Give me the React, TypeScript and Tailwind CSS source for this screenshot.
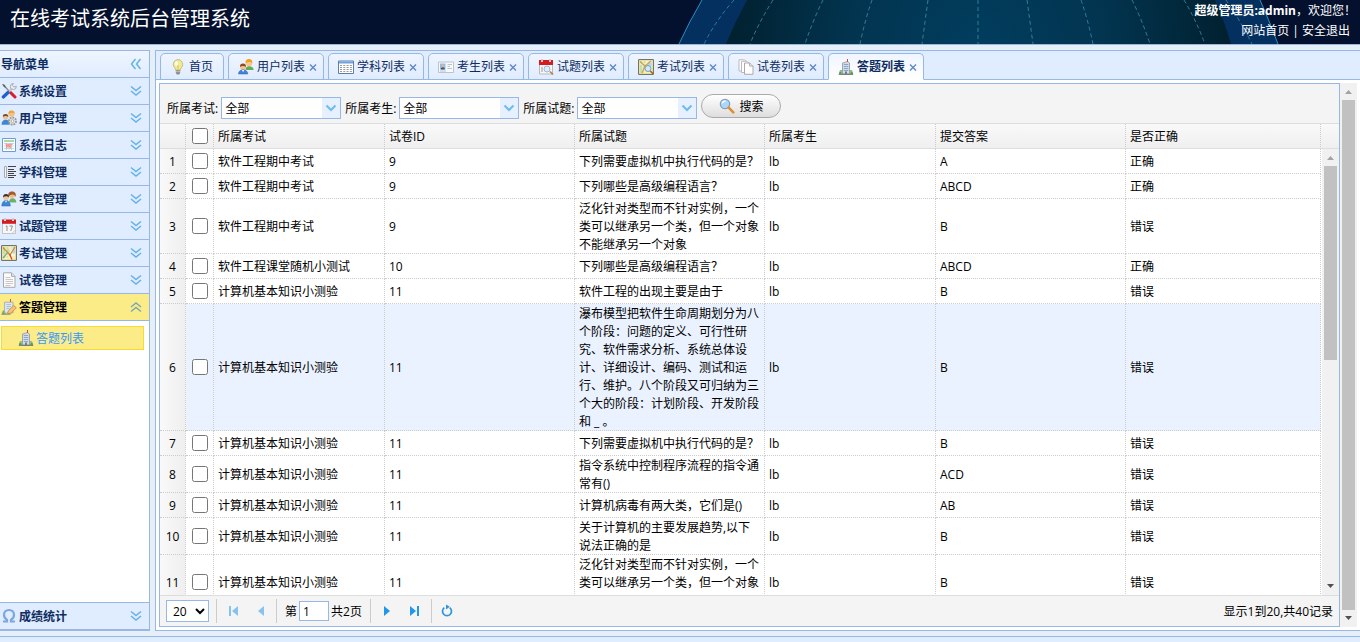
import { useState } from "react";
import type { ReactNode } from "react";

const icons: Record<string, ReactNode> = {
  tools: (
    <>
      <path d="M2 1.5 13.5 14" stroke="#8a8a8a" strokeWidth="1.4" />
      <path d="M1 1l3 1 1 3-2-1z" fill="#666" />
      <path d="M8.500 8.500 14 14" stroke="#d8202a" strokeWidth="3" strokeLinecap="round" />
      <path d="M12.500 4 6.500 10" stroke="#c4c7cc" strokeWidth="2.200" />
      <path d="M7 9.500 2.300 14" stroke="#1d63cf" strokeWidth="3.200" strokeLinecap="round" />
      <path d="M15.300 3.200a3 3 0 1 1-3-2.700l-1 2 1.600 1.600z" fill="#eceeef" stroke="#9a9ea3" strokeWidth=".8" />
    </>
  ),
  userGear: (
    <>
      <circle cx="10.500" cy="3.800" r="3" fill="#f3c08a" />
      <path d="M7.500 4C7.200 1 9 .4 10.600.4s3.400.8 3 3.600c-1-1.600-4-1.800-6.100 0z" fill="#eba52c" />
      <circle cx="4.600" cy="7" r="2.700" fill="#f0c193" />
      <path d="M1.900 7C1.700 4.600 3 4 4.600 4s3 .8 2.700 3c-1.200-1.300-4-1.400-5.400 0z" fill="#7a4a22" />
      <path d="M.5 14.800c0-3 1.500-5 4.200-5s4 2 4 5z" fill="#3f86da" />
      <circle cx="11.500" cy="11" r="3.300" fill="#e5e5e5" stroke="#9a9d94" strokeWidth="2.400" strokeDasharray="1.700 .8" />
      <circle cx="11.500" cy="11" r="2.600" fill="#e2e3dd" />
      <circle cx="11.500" cy="11" r="1.300" fill="#fff" stroke="#999" strokeWidth=".7" />
    </>
  ),
  log: (
    <>
      <path d="M1.500 1.500h13v13h-13z" fill="#fff" stroke="#6c9fd4" />
      <path d="M3 4h10" stroke="#9dcf86" strokeWidth="1.600" />
      <path d="M3 6.500h10M3 9h10M3 11.500h10M5.500 6v7M8 6v7M10.500 6v7" stroke="#b8cfe8" strokeWidth=".8" />
      <path d="M4.500 7.500h7M5.500 6.500v5M9.500 6.500v5" stroke="#f4897f" strokeWidth="1.200" opacity=".8" />
      <path d="M5.500 8h4.500v2.500H5.500z" fill="#f79b92" />
    </>
  ),
  lines: (
    <>
      <path d="M3.500 2.500h2v11h-2z" fill="#f6f6f6" stroke="#aaa" />
      <path d="M7 2.500h8M7 5.500h6M7 7.500h8M7 9.500h6M7 11.500h8M7 13.500h6" stroke="#444" />
    </>
  ),
  users: (
    <>
      <circle cx="11" cy="4" r="3" fill="#f0bd8c" />
      <path d="M7.500 6C6.500 2 8.500.6 11 .6s4.500 1.800 3.700 5.400c-.8-3-4.700-3.600-7.200 0z" fill="#a5592c" />
      <path d="M8 11.500c0-2.500 1-4.300 3.300-4.300 2.700 0 4 1.800 4 4.300z" fill="#6fb265" />
      <circle cx="5" cy="6.500" r="2.800" fill="#f3c79c" />
      <path d="M2.100 6.400C2 4 3.400 3 5 3s3.200 1 2.900 3.400c-1.500-1.500-4.200-1.500-5.800 0z" fill="#3a2d25" />
      <path d="M.8 15c0-3.200 1.600-5.500 4.300-5.500S9.300 11.800 9.300 15z" fill="#3d87d8" stroke="#2b66b0" strokeWidth=".5" />
      <path d="m4 9.700 1 2 1.100-2z" fill="#fff" />
    </>
  ),
  usersPair: (
    <>
      <circle cx="11" cy="4" r="3.200" fill="#f7c690" />
      <path d="M7.600 4.400C7.300 1 9 .1 11 .1s3.700 1.200 3.400 4.300c-1.500-1.700-4.700-1.800-6.800 0z" fill="#f0a31a" />
      <path d="M7.500 11c0-2.500 1-3.800 3.500-3.800 3 0 4.600 1.600 4.600 3.800z" fill="#64ad50" />
      <circle cx="5" cy="8" r="2.900" fill="#f3c093" />
      <path d="M2 8c-.2-2.600 1.200-3.500 3-3.500s3.200 1 3 3.500C6.500 6.700 3.600 6.600 2 8z" fill="#8d4c20" />
      <path d="M.5 15c0-2.500 1.700-4.200 4.500-4.200S9.800 12.500 9.800 15z" fill="#3e84dc" stroke="#2764b4" strokeWidth=".5" />
      <path d="m3.800 11 1.300 2 1.200-2z" fill="#fff" />
    </>
  ),
  calendar: (
    <>
      <path d="M1.500 4h13v11.500h-13z" fill="#f7f7f7" stroke="#c4c4c4" />
      <path d="M1 1.500h14v4.300H1z" fill="#d51b20" />
      <path d="M4 0v3M12 0v3" stroke="#fff" strokeWidth="1.800" />
      <path d="M4 0v2.500M12 0v2.500" stroke="#777" strokeWidth=".7" />
      <path d="m4.800 8.500 1.200-.7V13M8.500 8h3L9.700 13" fill="none" stroke="#8c9298" />
      <path d="m11 15.500 3.500-3.500" stroke="#c8c8c8" />
    </>
  ),
  calendarSearch: (
    <>
      <path d="M1.500 4h13v11h-13z" fill="#f7f7f7" stroke="#b9b9b9" />
      <path d="M1 1h14v5H1z" fill="#d51b20" />
      <path d="M4 0v3M12 0v3" stroke="#fff" strokeWidth="1.800" />
      <path d="M4 0v2.500M12 0v2.500" stroke="#777" strokeWidth=".7" />
      <path d="M4 8v5" stroke="#999" />
      <circle cx="9" cy="10" r="3" fill="#dcedfb" stroke="#9cb8d2" />
      <path d="m12 12.500 3 3" stroke="#b88045" strokeWidth="1.600" />
    </>
  ),
  map: (
    <>
      <path d="M.6.600h14.800v14.800H.6z" fill="#f6efae" stroke="#64685a" />
      <path d="M2 2h5l2 5-3 6H2z" fill="#c3dea8" />
      <path d="M10 2h4v6l-3 1z" fill="#b5d6f2" />
      <path d="M5 2v12M2 10h12M11 2v12" stroke="#fff" strokeWidth=".8" />
      <path d="M2 2.500 9 10l5-8" fill="none" stroke="#e0822f" strokeWidth="1.200" />
      <path d="m8.500 9 2.500 5.500" stroke="#e23b2c" strokeWidth="1.300" />
      <path d="m2 13 5-6" fill="none" stroke="#83ad5c" strokeWidth="1.200" />
    </>
  ),
  mapSearch: (
    <>
      <path d="M.6.600h14.800v14.800H.6z" fill="#f6efae" stroke="#64685a" />
      <path d="M2 2h5l1 5-3 7H2z" fill="#c7e0ab" />
      <path d="M10 2h4v5h-4z" fill="#b9d9f3" />
      <path d="M2 5h7M5 2v10M9 3h5" stroke="#fff" strokeWidth=".8" />
      <path d="m2 2.500 5 4.500-3 7M7 7l6-5" fill="none" stroke="#d99b45" strokeWidth="1.200" />
      <circle cx="10" cy="9.500" r="3" fill="#d2e9fb" stroke="#6f9ec9" />
      <path d="m12.300 12 3 3" stroke="#a8652b" strokeWidth="1.700" />
    </>
  ),
  page: (
    <>
      <path d="M2.500.8h8l3.500 3.500v11H2.500z" fill="#fbfbfb" stroke="#a8a8a8" />
      <path d="M10.500.8v3.500H14" fill="#e4e4e4" stroke="#a8a8a8" />
      <path d="M4.500 5.500h5M4.500 7.500h7.500M4.500 9.500h7.500M4.500 11.500h7.500M4.500 13.500h5" stroke="#c2c2c2" strokeWidth=".9" />
    </>
  ),
  pages: (
    <>
      <path d="M1 .8h5.500L9 3.300V12H1z" fill="#fff" stroke="#bbb" />
      <path d="M3.500 2.300h5.500l2.500 2.500V13.500h-8z" fill="#fff" stroke="#bbb" />
      <path d="M6.500 4h5.300L15 7v8.300H6.500z" fill="#fff" stroke="#aaa" />
      <path d="M11.700 4v3.100H15" fill="#eee" stroke="#aaa" />
    </>
  ),
  edit: (
    <>
      <path d="M.5 15.200 2 11.500h3v3.700z" fill="#6fb05f" />
      <path d="M3.500 3.200h8.500V14H3.500z" fill="#dbe5f0" stroke="#a0a7b0" strokeWidth=".8" />
      <path d="M5.500 5.500h4.500M5.500 7.500h4.500M5.500 9.500h3" stroke="#a9bfdb" />
      <path d="M9.500 0v3" stroke="#d92b2b" strokeWidth=".8" />
      <path d="m6.500 15 .9-3.300L12.800 6.500l2.500 2.300-5.200 5.300z" fill="#f8c474" stroke="#c58738" strokeWidth=".8" />
      <path d="M.5 15.400h9" stroke="#8a8a8a" strokeWidth=".8" />
    </>
  ),
  building: (
    <>
      <path d="M.8 15 2 11h2.500v4zM11.500 15v-4H14l1.200 4z" fill="#8fc286" />
      <path d="M1 15 1.800 12.500 4 14.500zM15 15l-.8-2.500-2.200 2z" fill="#4a9a3e" />
      <path d="M4.500 4 9.500 2.500l2 1.500v11h-7z" fill="#d4dae2" stroke="#8f959d" strokeWidth=".8" />
      <path d="M5.800 5.500h4.400M5.800 7.500h4.400M5.800 9.500h4.400M5.800 11.500h4.400" stroke="#86a8d2" />
      <path d="M7 12.500h2V15H7z" fill="#6f7e94" />
      <path d="M9.500 0v2.800" stroke="#d92b2b" strokeWidth=".9" />
      <path d="M.8 15.400h14.400" stroke="#666" strokeWidth=".9" />
    </>
  ),
  omega: (
    <path
      d="M2 13.500h4v-1.600C4 10.600 3 9 3 6.800 3 4 5 2 8 2s5 2 5 4.800c0 2.200-1 3.800-3 5.100v1.600h4"
      fill="none"
      stroke="#7ba6de"
      strokeWidth="2.200"
    />
  ),
  bulb: (
    <>
      <path d="M8 .6a4.700 4.700 0 0 1 4.700 4.800c0 2.600-2.200 3.300-2.500 5.800H5.800C5.500 8.700 3.300 8 3.300 5.400A4.700 4.700 0 0 1 8 .6z" fill="#f2ea94" stroke="#b9b17a" strokeWidth=".8" />
      <ellipse cx="6.500" cy="4.500" rx="1.700" ry="2.300" fill="#fffde4" />
      <path d="M8 6v5" stroke="#d8b45a" strokeWidth=".8" />
      <path d="M5.800 11.300h4.400v2.500L9.200 15.500H6.800l-1-1.700z" fill="#8b8b84" />
      <path d="M5.800 12.700h4.400" stroke="#ddd" strokeWidth=".7" />
    </>
  ),
  table: (
    <>
      <path d="M.5 2h15v12.500H.5z" fill="#fff" stroke="#5c7fae" />
      <path d="M1 2.500h14v2H1z" fill="#6fa3e0" />
      <path d="M2 6.500h12M2 8.500h12M2 10.500h12M2 12.500h12" stroke="#9a9a9a" strokeDasharray="2 1.300" />
    </>
  ),
  card: (
    <>
      <path d="M.5 3h15v10.500H.5z" fill="#f7f9fb" stroke="#bdc4cc" />
      <path d="M2 4.500h5.500v6H2z" fill="#8fbdea" />
      <circle cx="4.800" cy="6.700" r="1.500" fill="#eab280" />
      <path d="M2.800 10.500c0-1.500.8-2.200 2-2.200s2 .7 2 2.200z" fill="#31588d" />
      <path d="M9.500 5.500H14M9.500 7.500H12M9.500 9.500H14M2 12h6" stroke="#b4bbc3" strokeWidth=".9" />
    </>
  ),
  search: (
    <>
      <circle cx="6" cy="6" r="4.700" fill="#a9d8fb" stroke="#8d9cb4" strokeWidth="1.200" />
      <path d="M3.200 5.200c.5-1.600 1.800-2.300 3.300-2.200" stroke="#fff" strokeWidth="1.300" fill="none" />
      <path d="m9.700 9.700 4.600 4.600" stroke="#e08d2a" strokeWidth="2.600" strokeLinecap="round" />
    </>
  ),
};

function Icon({ name }: { name: string }) {
  return (
    <svg viewBox="0 0 16 16" fill="none" className="size-4 shrink-0" aria-hidden="true">
      {icons[name]}
    </svg>
  );
}

function Chevrons({ dir }: { dir: "down" | "up" | "left" }) {
  const d = {
    down: "M3 3.500l5 4 5-4M3 8l5 4 5-4",
    up: "M3 8l5-4 5 4M3 12.500l5-4 5 4",
    left: "M7.500 3l-4 5 4 5M12.500 3l-4 5 4 5",
  }[dir];
  return (
    <svg viewBox="0 0 16 16" fill="none" className="size-4 shrink-0" aria-hidden="true">
      <path d={d} stroke={dir === "up" ? "#7aa9b0" : "#62b2ea"} strokeWidth="1.500" />
    </svg>
  );
}

const menus = [
  { title: "系统设置", icon: "tools" },
  { title: "用户管理", icon: "userGear" },
  { title: "系统日志", icon: "log" },
  { title: "学科管理", icon: "lines" },
  { title: "考生管理", icon: "users" },
  { title: "试题管理", icon: "calendar" },
  { title: "考试管理", icon: "map" },
  { title: "试卷管理", icon: "page" },
  { title: "答题管理", icon: "edit" },
];

const tabs = [
  { title: "用户列表", icon: "usersPair" },
  { title: "学科列表", icon: "table" },
  { title: "考生列表", icon: "card" },
  { title: "试题列表", icon: "calendarSearch" },
  { title: "考试列表", icon: "mapSearch" },
  { title: "试卷列表", icon: "pages" },
  { title: "答题列表", icon: "building" },
];

const mid = "软件工程期中考试";
const base = "计算机基本知识小测验";
const vm = "下列需要虚拟机中执行代码的是？";

const rows = [
  [mid, "9", vm, "A", "正确"],
  [mid, "9", "下列哪些是高级编程语言？", "ABCD", "正确"],
  [mid, "9", "泛化针对类型而不针对实例，一个类可以继承另一个类，但一个对象不能继承另一个对象", "B", "错误"],
  ["软件工程课堂随机小测试", "10", "下列哪些是高级编程语言？", "ABCD", "正确"],
  [base, "11", "软件工程的出现主要是由于", "B", "错误"],
  [
    base,
    "11",
    "瀑布模型把软件生命周期划分为八个阶段：问题的定义、可行性研究、软件需求分析、系统总体设计、详细设计、编码、测试和运行、维护。八个阶段又可归纳为三个大的阶段：计划阶段、开发阶段和 _ 。",
    "B",
    "错误",
  ],
  [base, "11", vm, "B", "错误"],
  [base, "11", "指令系统中控制程序流程的指令通常有()", "ACD", "错误"],
  [base, "11", "计算机病毒有两大类，它们是()", "AB", "错误"],
  [base, "11", "关于计算机的主要发展趋势,以下说法正确的是", "B", "错误"],
  [base, "11", "泛化针对类型而不针对实例，一个类可以继承另一个类，但一个对象", "B", "错误"],
];

function Header() {
  return (
    <header className="relative flex h-[45px] shrink-0 justify-between overflow-hidden border-b border-[#95b8e7] bg-[#04112e] text-white">
      <svg viewBox="0 0 700 44" className="absolute top-0 right-0 h-[44px] w-[700px]" fill="none" aria-hidden="true">
        <defs>
          <radialGradient id="sea" gradientUnits="userSpaceOnUse" cx="318" cy="44" r="260">
            <stop offset="0" stopColor="#013d5e" />
            <stop offset=".5" stopColor="#02344f" />
            <stop offset="1" stopColor="#011f2d" />
          </radialGradient>
        </defs>
        <path d="M42 0Q29 22 19 44H618Q609 20 600 0z" fill="#04305f" />
        <path d="M42 0Q29 22 19 44M600 0Q609 20 618 44" stroke="#2a91c0" />
        <path d="M87 0Q75 22 66 44H571Q564 20 555 0z" fill="url(#sea)" />
        <path
          d="M74 0Q56 20 44 44M113 0Q99 22 90 44M163 0Q153 20 145 44M212 0Q205 20 200 44M268 0L262 44M318 0V44M367 0L373 44M421 0Q428 20 433 44M472 0Q482 20 490 44M524 0Q536 20 545 44M566 0Q580 20 592 44"
          stroke="#3f8fa8"
          strokeDasharray="4 3"
          opacity=".8"
        />
      </svg>
      <h1 className="relative pt-[5px] pl-[10px] text-[20px] leading-[28px]">在线考试系统后台管理系统</h1>
      <div className="relative pt-px text-right leading-[20px]">
        <div className="pr-1">
          <b>超级管理员:admin</b>，欢迎您！
        </div>
        <div className="pr-[10px]">
          <a href="#home">网站首页</a> | <a href="#logout">安全退出</a>
        </div>
      </div>
    </header>
  );
}

function Sidebar() {
  return (
    <nav className="flex w-[150px] shrink-0 flex-col border-y border-r border-[#95b8e7] bg-white font-bold text-[#0e2d5f]">
      <div className="flex h-[27px] items-center justify-between border-b border-[#95b8e7] bg-linear-to-b from-[#eff5ff] to-[#e0ecff] pr-[5px] pl-px">
        <span className="pt-[2px]">导航菜单</span>
        <button aria-label="收起">
          <Chevrons dir="left" />
        </button>
      </div>
      {menus.map((m) => (
        <button
          key={m.title}
          className={
            m.title === "答题管理"
              ? "flex h-[27px] items-center border-b border-[#95b8e7] bg-[#fbec88] pr-[5px] pl-px text-black"
              : "flex h-[27px] items-center border-b border-[#95b8e7] bg-[#e0ecff] pr-[5px] pl-px"
          }
        >
          <Icon name={m.icon} />
          <span className="flex-1 pt-[2px] pl-[2px] text-left">{m.title}</span>
          <Chevrons dir={m.title === "答题管理" ? "up" : "down"} />
        </button>
      ))}
      <div className="flex-1 pt-[5px] pr-[5px] pl-px font-normal">
        <a
          href="#answers"
          className="flex h-[24px] items-center gap-[2px] border border-[#f7dc2c] bg-[#fbec88] pl-4 text-[#3399ff]"
        >
          <Icon name="building" />
          <span className="pt-[2px]">答题列表</span>
        </a>
      </div>
      <button className="flex h-[28px] items-center border-y border-[#95b8e7] bg-[#e0ecff] pr-[5px] pl-px">
        <Icon name="omega" />
        <span className="flex-1 pt-[2px] pl-[2px] text-left">成绩统计</span>
        <Chevrons dir="down" />
      </button>
    </nav>
  );
}

function Tabs() {
  return (
    <div role="tablist" className="flex h-[29px] shrink-0 gap-1 border-b border-[#95b8e7] bg-[#e0ecff] pt-[2px] pl-1 text-[#0e2d5f]">
      <div
        role="tab"
        className="-mb-px flex h-[27px] w-16 items-center gap-[3px] rounded-t-[5px] border border-[#95b8e7] bg-linear-to-b from-[#eff5ff] to-[#e0ecff] pl-[9px]"
      >
        <Icon name="bulb" />
        首页
      </div>
      {tabs.map((t) => (
        <div
          key={t.title}
          role="tab"
          className={
            t.title === "答题列表"
              ? "-mb-px flex h-[27px] w-24 items-center gap-[3px] rounded-t-[5px] border border-[#95b8e7] border-b-white bg-linear-to-b from-[#eff5ff] to-white pl-[9px] font-bold"
              : "-mb-px flex h-[27px] w-24 items-center gap-[3px] rounded-t-[5px] border border-[#95b8e7] bg-linear-to-b from-[#eff5ff] to-[#e0ecff] pl-[9px]"
          }
        >
          <Icon name={t.icon} />
          {t.title}
          <button aria-label={"关闭" + t.title}>
            <svg viewBox="0 0 10 10" className="size-[10px]" fill="none" aria-hidden="true">
              <path d="M2 2.500l6 6M8 2.500l-6 6" stroke="#5c86c4" strokeWidth="1.300" />
            </svg>
          </button>
        </div>
      ))}
    </div>
  );
}

function Filter({ id, label }: { id: string; label: string }) {
  return (
    <div className="flex items-center gap-[3px]">
      <label htmlFor={id} className="pt-[2px]">
        {label}
      </label>
      <div className="relative">
        <select
          id={id}
          className="block h-[22px] w-[120px] appearance-none border border-[#95b8e7] bg-white px-[3px] pt-px leading-[20px]"
        >
          <option>全部</option>
        </select>
        <span className="pointer-events-none absolute inset-y-px right-px flex w-[18px] items-center justify-center bg-[#e6f0ff]">
          <svg viewBox="0 0 12 8" className="h-2 w-3" fill="none" aria-hidden="true">
            <path d="M1.500 1.500 6 6l4.500-4.500" stroke="#6cbcf0" strokeWidth="2" />
          </svg>
        </span>
      </div>
    </div>
  );
}

function ScrollBar({ thumb }: { thumb: string }) {
  return (
    <div className="flex w-[17px] flex-1 flex-col items-center bg-[#f1f1f1]" aria-hidden="true">
      <svg viewBox="0 0 17 17" className="size-[17px] shrink-0">
        <path d="M5 11h7L8.500 7z" fill="#a3a3a3" />
      </svg>
      <div className="flex w-[13px] flex-1">
        <div className={thumb} />
      </div>
      <svg viewBox="0 0 17 17" className="size-[17px] shrink-0">
        <path d="M5 6h7l-3.500 4z" fill="#505050" />
      </svg>
    </div>
  );
}

const th =
  "h-[25px] border-r border-b border-r-[#ccc] border-b-[#ddd] [border-right-style:dotted] px-1 pt-[2px] text-left font-normal";
const td = "h-[25px] border-r border-b border-dotted border-[#ccc] px-1";
const check = "mx-auto block size-4";

function Cell({ children }: { children: ReactNode }) {
  return (
    <td className={td}>
      <div className="-mb-px pt-px">{children}</div>
    </td>
  );
}

function Grid() {
  return (
    <div className="flex min-h-0 flex-1 overflow-hidden bg-white">
      <div className="min-w-0 flex-1 overflow-hidden">
        <table className="w-full table-fixed border-separate border-spacing-0">
          <colgroup>
            <col className="w-[26px]" />
            <col className="w-[28px]" />
            <col className="w-[171px]" />
            <col className="w-[190px]" />
            <col className="w-[190px]" />
            <col className="w-[171px]" />
            <col className="w-[190px]" />
            <col />
          </colgroup>
          <thead>
            <tr className="bg-linear-to-b from-[#f9f9f9] to-[#efefef]">
              <th className={th}></th>
              <th className="border-r border-b border-r-[#ccc] border-b-[#ddd] [border-right-style:dotted]">
                <input type="checkbox" aria-label="全选" className={check} />
              </th>
              <th className={th}>所属考试</th>
              <th className={th}>试卷ID</th>
              <th className={th}>所属试题</th>
              <th className={th}>所属考生</th>
              <th className={th}>提交答案</th>
              <th className={th}>是否正确</th>
            </tr>
          </thead>
          <tbody>
            {rows.map((r, i) => (
              <tr key={i} className={i === 5 ? "bg-[#eaf2ff]" : "last:h-[55px] hover:bg-[#eaf2ff] [&:last-child>td:nth-child(5)]:align-top"}>
                <td className="border-r border-b border-dotted border-[#ccc] bg-linear-to-r from-[#f9f9f9] to-[#efefef] text-center">
                  <div className="-mb-px pt-px">{i + 1}</div>
                </td>
                <td className={td}>
                  <input type="checkbox" aria-label={"选择第" + (i + 1) + "行"} className={check} />
                </td>
                <Cell>{r[0]}</Cell>
                <Cell>{r[1]}</Cell>
                <Cell>{r[2]}</Cell>
                <Cell>lb</Cell>
                <Cell>{r[3]}</Cell>
                <Cell>{r[4]}</Cell>
              </tr>
            ))}
          </tbody>
        </table>
      </div>
      <div className="flex w-[18px] shrink-0 flex-col">
        <div className="h-[25px] shrink-0 border-b border-[#ddd] bg-linear-to-b from-[#f9f9f9] to-[#efefef]" />
        <div className="flex flex-1 flex-col pl-px">
          <ScrollBar thumb="h-[47%] w-full bg-[#c1c1c1]" />
        </div>
      </div>
    </div>
  );
}

function PageIcon({ label, d, disabled }: { label: string; d: string; disabled?: boolean }) {
  return (
    <button aria-label={label} disabled={disabled} className="flex size-[28px] items-center justify-center">
      <svg viewBox="0 0 16 16" className="size-4" fill={disabled ? "#86c3ef" : "#1f97ea"} aria-hidden="true">
        <path d={d} />
      </svg>
    </button>
  );
}

function Pager() {
  const [page, setPage] = useState("1");
  return (
    <div className="flex h-[31px] shrink-0 items-center border-t border-[#ddd] px-[6px]">
      <select
        aria-label="每页条数"
        className="h-[22px] w-[43px] border border-[#95b8e7] bg-white pl-[2px]"
      >
        <option>20</option>
      </select>
      <div className="ml-[7px] h-6 border-l border-[#ccc]" />
      <div className="flex pl-[2px]">
        <PageIcon label="首页" disabled d="M4 3h2v10H4zM13 3v10L7 8z" />
        <PageIcon label="上一页" disabled d="M11 3v10L5 8z" />
      </div>
      <div className="ml-px h-6 border-l border-[#ccc]" />
      <label htmlFor="page" className="pt-[2px] pr-[2px] pl-2">
        第
      </label>
      <input
        id="page"
        value={page}
        onChange={(e) => setPage(e.target.value)}
        className="h-[20px] w-[30px] border border-[#95b8e7] bg-white px-[3px]"
      />
      <span className="pt-[2px] pr-2 pl-[2px]">共2页</span>
      <div className="h-6 border-l border-[#ccc]" />
      <div className="flex px-[2px]">
        <PageIcon label="下一页" d="M5 3v10l6-5z" />
        <PageIcon label="末页" d="M3 3v10l6-5zM10 3h2v10h-2z" />
      </div>
      <div className="h-6 border-l border-[#ccc]" />
      <button aria-label="刷新" className="ml-px flex size-[28px] items-center justify-center">
        <svg viewBox="0 0 16 16" className="size-4" fill="none" aria-hidden="true">
          <path d="M5.300 4.600A4.500 4.500 0 1 0 10.700 4.600" stroke="#2f94dc" strokeWidth="1.700" />
          <path d="M7 1.500v5l3.800-2.800z" fill="#2f94dc" />
        </svg>
      </button>
      <span className="ml-auto pt-[2px]">显示1到20,共40记录</span>
    </div>
  );
}

export default function App() {
  return (
    <div className="flex h-screen flex-col overflow-hidden bg-[#e6eef8] font-['Open_Sans','Noto_Sans_CJK_SC',sans-serif] text-[12px] leading-[18px] text-black">
      <Header />
      <div className="flex min-h-0 flex-1 gap-[5px] py-[5px]">
        <Sidebar />
        <main className="flex min-w-0 flex-1 flex-col border-y border-l border-[#95b8e7] bg-white">
          <Tabs />
          <div className="flex min-h-0 flex-1 p-[3px]">
            <section className="flex min-w-0 flex-1 flex-col border border-[#95b8e7] bg-[#f4f4f4]">
              <form
                className="flex h-[40px] shrink-0 items-center gap-1 border-b border-[#ddd] px-[7px]"
                onSubmit={(e) => e.preventDefault()}
              >
                <div className="flex gap-1 pt-2">
                  <Filter id="exam" label="所属考试:" />
                  <Filter id="student" label="所属考生:" />
                  <Filter id="question" label="所属试题:" />
                </div>
                <button className="mt-1 flex h-[24px] w-[80px] items-center justify-center gap-1 rounded-full border border-[#aaa] bg-linear-to-b from-white to-[#dedede]">
                  <Icon name="search" />
                  <span className="pt-[2px]">搜索</span>
                </button>
              </form>
              <Grid />
              <Pager />
            </section>
            <div className="flex flex-col">
              <ScrollBar thumb="w-full bg-[#c1c1c1]" />
            </div>
          </div>
        </main>
      </div>
      <footer className="h-[6px] shrink-0 border-t border-[#95b8e7] bg-[#e0ecff]" />
    </div>
  );
}
